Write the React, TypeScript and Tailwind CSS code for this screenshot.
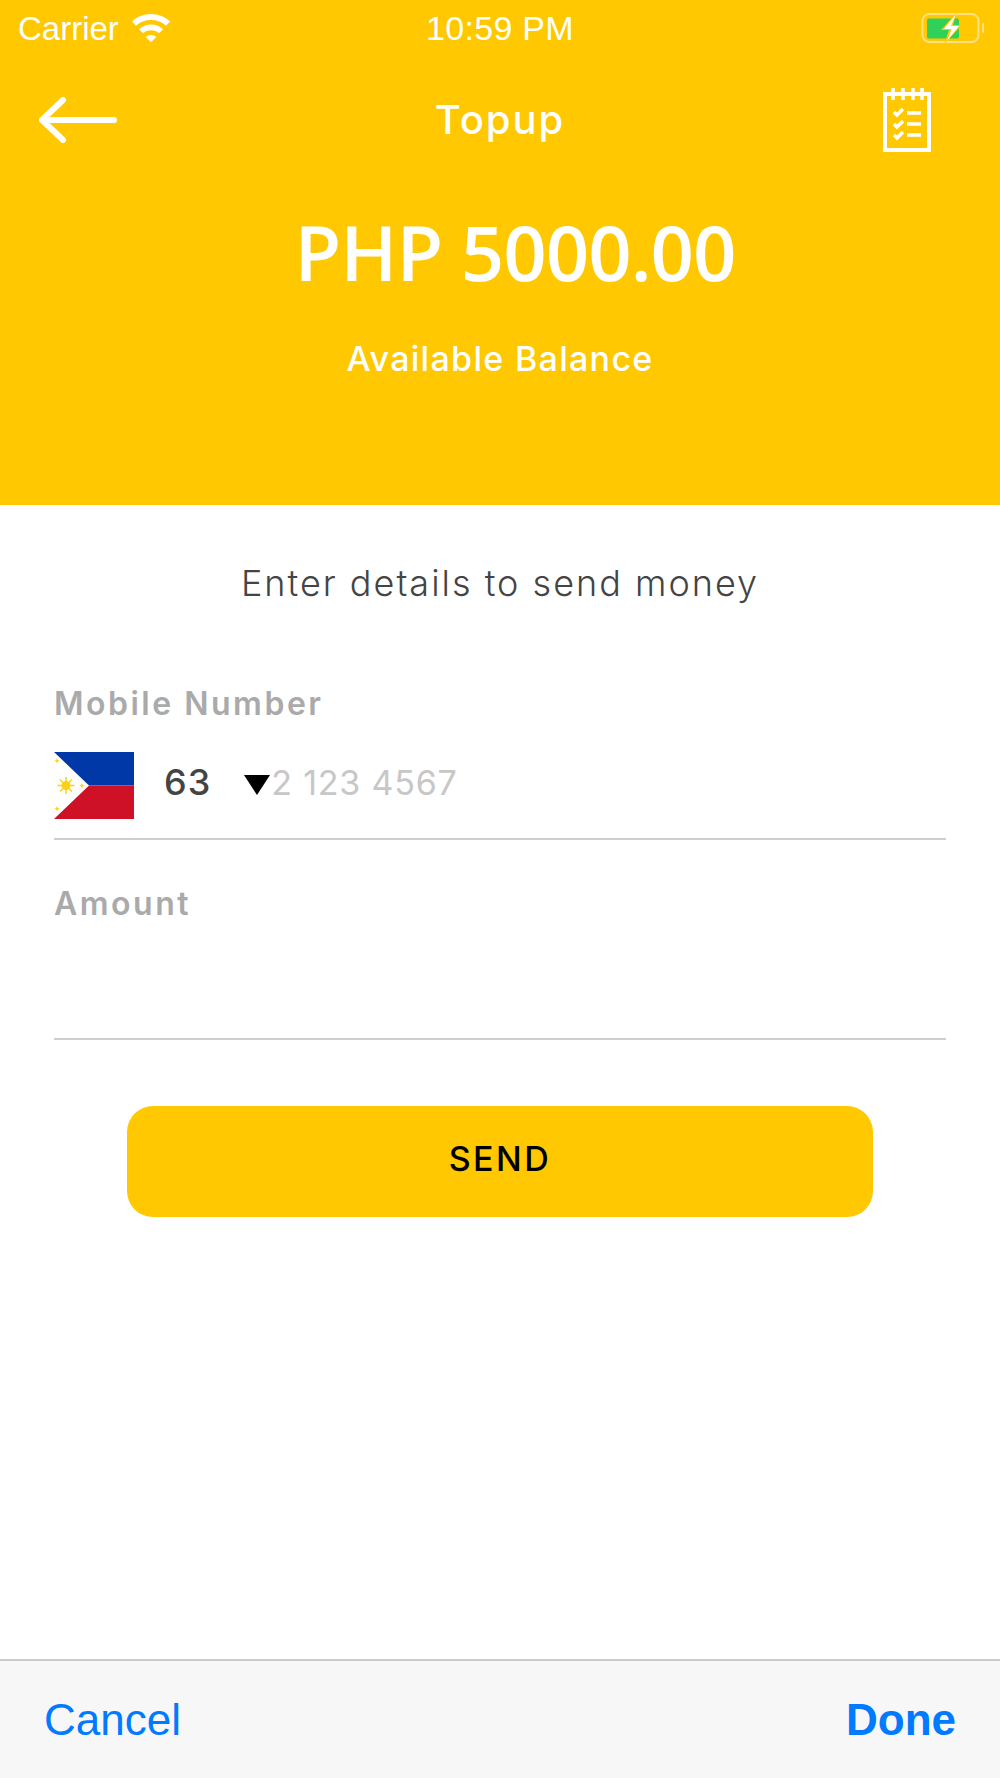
function Wifi() {
  return (
    <svg width="40" height="30" viewBox="0 0 40 30" fill="#fff">
      <path d="M20 1C12.500 1 6 3.800 1 8.500l4 4.200C9 9 14.200 7 20 7s11 2 15 5.700l4-4.200C34 3.800 27.500 1 20 1z" />
      <path d="M20 11.500c-4.800 0-9 1.700-12 4.700l4 4.100c2-1.900 4.800-3 8-3s6 1.100 8 3l4-4.100c-3-3-7.200-4.700-12-4.700z" />
      <path d="M20 22c-2.200 0-4 .8-5.300 2l5.300 5.200 5.300-5.200c-1.300-1.200-3.100-2-5.300-2z" />
    </svg>
  );
}

function Battery() {
  return (
    <svg width="64" height="32" viewBox="0 0 64 32">
      <rect x="1.500" y="2" width="56" height="28" rx="7" fill="none" stroke="#ffe083" strokeWidth="2" />
      <rect x="61" y="11" width="2" height="10" rx="1" fill="#ffe083" />
      <rect x="6" y="6.500" width="32" height="20" rx="2" fill="#30d158" />
      <path d="M36 0 20 18h8l-5 14 18-19h-9l4-13z" fill="#ffc800" />
      <path d="M35 2 23 17h7.500L26 29l12-15h-8l5-12z" fill="#fff" />
    </svg>
  );
}

function BackArrow() {
  return (
    <svg width="80" height="46" viewBox="0 0 80 46" fill="none" stroke="#fff" strokeWidth="6" strokeLinecap="round" strokeLinejoin="round">
      <path d="M3 23h72M24 3 3 23l21 20" />
    </svg>
  );
}

function Notepad() {
  return (
    <svg width="48" height="64" viewBox="0 0 48 64" fill="none" stroke="#fff">
      <path d="M2 6h44v56H2z" strokeWidth="4" />
      <path d="M10 0v12M20 0v12M30 0v12M39 0v12" strokeWidth="3.500" />
      <path d="M11 24l3 3 6-6M11 36l3 3 6-6M11 47l3 3 6-6" strokeWidth="3.500" />
      <path d="M24 25h14M24 36h14M24 47h14" strokeWidth="3.500" />
    </svg>
  );
}

function Flag() {
  return (
    <svg width="80" height="67" viewBox="0 0 80 67" className="shrink-0">
      <rect width="80" height="33.500" fill="#0038a8" />
      <rect y="33.500" width="80" height="33.500" fill="#ce1126" />
      <path d="M0 0 35 33.500 0 67z" fill="#fff" />
      <circle cx="12" cy="33.500" r="4.500" fill="#fcd116" />
      <path d="M12 25v17M3.500 33.500h17M6 27.500l12 12M18 27.500l-12 12" stroke="#fcd116" strokeWidth="1.500" />
      <path d="M3 6l.8 2 2 .8-2 .8L3 11.600l-.8-2-2-.8 2-.8zM28 31l.8 2 2 .8-2 .8-.8 2-.8-2-2-.8 2-.8zM3 54l.8 2 2 .8-2 .8-.8 2-.8-2-2-.8 2-.8z" fill="#fcd116" />
    </svg>
  );
}

export default function App() {
  return (
    <div className="flex h-[1778px] w-[1000px] flex-col bg-white font-['Inter',sans-serif]">
      <header className="h-[505px] shrink-0 bg-[#ffc800] text-white">
        <div className="relative flex h-[56px] items-center pl-[18px] pr-[15px] font-['Liberation_Sans',sans-serif] text-[33px] leading-none">
          <span>Carrier</span>
          <span className="ml-[12px]"><Wifi /></span>
          <span className="absolute left-0 right-0 text-center text-[34px] tracking-[0.3px]">10:59 PM</span>
          <span className="ml-auto"><Battery /></span>
        </div>
        <div className="relative mt-[31px] flex h-[66px] items-center justify-between pl-[39px] pr-[69px]">
          <BackArrow />
          <h1 className="absolute left-0 right-0 text-center text-[40px] font-medium leading-none tracking-[2px]">Topup</h1>
          <Notepad />
        </div>
        <div className="mt-[49px] pl-[30px] text-center font-['Open_Sans',sans-serif] text-[76px] font-semibold leading-[100px] tracking-[-1px]">
          PHP 5000.00
        </div>
        <div className="mt-[37px] text-center text-[34px] font-medium leading-[40px] tracking-[1.3px]">
          Available Balance
        </div>
      </header>

      <main className="flex flex-1 flex-col px-[54px]">
        <p className="mt-[56px] text-center text-[36px] font-light leading-[44px] tracking-[2px] text-[#444]">
          Enter details to send money
        </p>

        <label className="mt-[79px] text-[32px] font-semibold leading-[40px] tracking-[2.500px] text-[#aaa]">Mobile Number</label>
        <div className="mt-[28px] flex h-[66px] items-center">
          <Flag />
          <span className="ml-[30px] pb-[6px] text-[36px] font-medium tracking-[1px] text-[#444]">63</span>
          <span className="ml-[33px] h-0 w-0 border-x-[13px] border-t-[20px] border-x-transparent border-t-black" />
          <span className="ml-[1px] pb-[6px] text-[34px] tracking-[0.8px] text-[#c7c7c7]">2 123 4567</span>
        </div>
        <div className="mt-[20px] h-[2px] bg-[#cfcfcf]" />

        <label className="mt-[44px] text-[32px] font-semibold leading-[40px] tracking-[2.500px] text-[#aaa]">Amount</label>
        <div className="mt-[114px] h-[2px] bg-[#cfcfcf]" />

        <button className="mx-auto mt-[66px] h-[111px] w-[746px] rounded-[26px] bg-[#ffc800] pb-[6px] text-[34px] font-medium tracking-[2.500px] text-black">
          SEND
        </button>
      </main>

      <footer className="flex h-[119px] shrink-0 items-center justify-between border-t-2 border-[#cbcbcb] bg-[#f7f7f8] pl-[44px] pr-[44px] font-['Liberation_Sans',sans-serif] text-[44px] text-[#007aff]">
        <button>Cancel</button>
        <button className="font-bold">Done</button>
      </footer>
    </div>
  );
}
